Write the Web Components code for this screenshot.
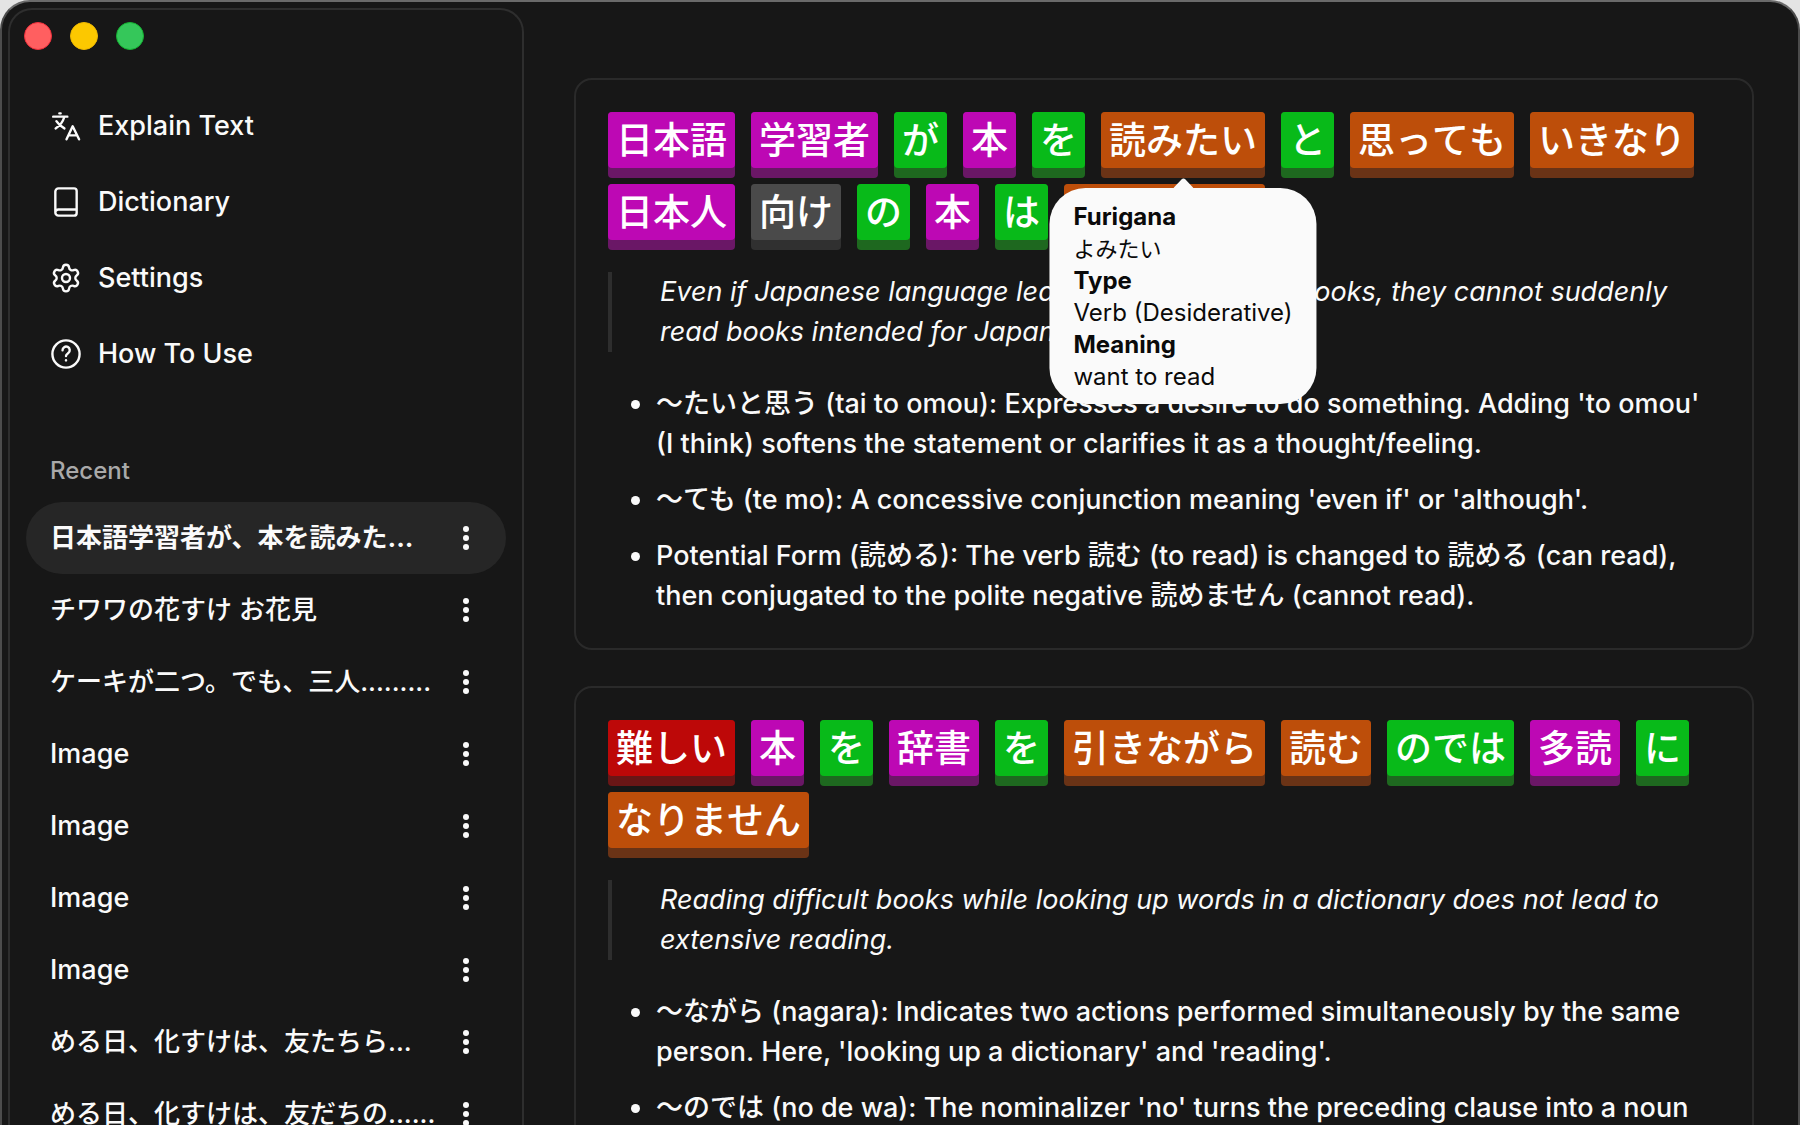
<!DOCTYPE html>
<html lang="en">
  <head>
    <meta charset="UTF-8" />
    <title>Explain Text</title>
    <style>
      body {
        margin: 0;
        height: 100vh;
        overflow: hidden;
        background: #e4e4e4;
        color: #fafafa;
        font-family: Inter, "Noto Sans CJK JP", sans-serif;
        font-size: 27px;
        font-weight: 450;
        line-height: 40px;
      }
    </style>
  </head>
  <body>
    <app-window>
      <side-bar slot="sidebar">
        <nav-item icon="translate">Explain Text</nav-item>
        <nav-item icon="book">Dictionary</nav-item>
        <nav-item icon="gear">Settings</nav-item>
        <nav-item icon="help">How To Use</nav-item>
        <recent-item slot="recent" lang="ja" active>日本語学習者が、本を読みた...</recent-item>
        <recent-item slot="recent" lang="ja">チワワの花すけ お花見</recent-item>
        <recent-item slot="recent" lang="ja">ケーキが二つ。でも、三人.........</recent-item>
        <recent-item slot="recent">Image</recent-item>
        <recent-item slot="recent">Image</recent-item>
        <recent-item slot="recent">Image</recent-item>
        <recent-item slot="recent">Image</recent-item>
        <recent-item slot="recent" lang="ja">める日、化すけは、友たちら...</recent-item>
        <recent-item slot="recent" lang="ja">める日、化すけは、友だちの......</recent-item>
      </side-bar>

      <sentence-card>
        <word-tile slot="words" type="noun">日本語</word-tile>
        <word-tile slot="words" type="noun">学習者</word-tile>
        <word-tile slot="words" type="particle">が</word-tile>
        <word-tile slot="words" type="noun">本</word-tile>
        <word-tile slot="words" type="particle">を</word-tile>
        <word-tile slot="words" type="verb">読みたい<word-tip
            slot="tip"
            furigana="よみたい"
            type="Verb (Desiderative)"
            meaning="want to read"
          ></word-tip></word-tile>
        <word-tile slot="words" type="particle">と</word-tile>
        <word-tile slot="words" type="verb">思っても</word-tile>
        <word-tile slot="words" type="verb">いきなり</word-tile>
        <word-tile slot="words" type="noun">日本人</word-tile>
        <word-tile slot="words">向け</word-tile>
        <word-tile slot="words" type="particle">の</word-tile>
        <word-tile slot="words" type="noun">本</word-tile>
        <word-tile slot="words" type="particle">は</word-tile>
        <word-tile slot="words" type="verb">読めません</word-tile>
        <span slot="translation">Even if Japanese language learners want to read books, they cannot suddenly read books intended for Japanese people.</span>
        <grammar-point>〜たいと思う (tai to omou): Expresses a desire to do something. Adding 'to omou' (I&nbsp;think) softens the statement or clarifies it as a thought/feeling.</grammar-point>
        <grammar-point>〜ても (te mo): A concessive conjunction meaning 'even if' or 'although'.</grammar-point>
        <grammar-point>Potential Form (読める): The verb 読む (to read) is changed to 読める (can read), then conjugated to the polite negative 読めません (cannot read).</grammar-point>
      </sentence-card>

      <sentence-card>
        <word-tile slot="words" type="adjective">難しい</word-tile>
        <word-tile slot="words" type="noun">本</word-tile>
        <word-tile slot="words" type="particle">を</word-tile>
        <word-tile slot="words" type="noun">辞書</word-tile>
        <word-tile slot="words" type="particle">を</word-tile>
        <word-tile slot="words" type="verb">引きながら</word-tile>
        <word-tile slot="words" type="verb">読む</word-tile>
        <word-tile slot="words" type="particle">のでは</word-tile>
        <word-tile slot="words" type="noun">多読</word-tile>
        <word-tile slot="words" type="particle">に</word-tile>
        <word-tile slot="words" type="verb">なりません</word-tile>
        <span slot="translation">Reading difficult books while looking up words in a dictionary does not lead to extensive reading.</span>
        <grammar-point>〜ながら (nagara): Indicates two actions performed simultaneously by the same person. Here, 'looking up a dictionary' and 'reading'.</grammar-point>
        <grammar-point>〜のでは (no de wa): The nominalizer 'no' turns the preceding clause into a noun</grammar-point>
      </sentence-card>
    </app-window>

    <script>
      const icons = {
        translate: `
          <path d="M2.4 5H13M7 2.5h1M10.6 5.6C9.6 9 7 12 4.2 13.8M4.8 8.4c1.4 2.2 3.6 4.2 6 5.4" />
          <path d="M12.4 22 17 12.2 21.8 22M14 19h6" />`,
        book: `
          <path d="M4 19.5V4.2A2.4 2.4 0 0 1 6.4 1.8H18a2 2 0 0 1 2 2v16.4a2 2 0 0 1-2 2H6.4A2.4 2.4 0 0 1 4 19.8a2.3 2.3 0 0 1 2.4-2.2H20" />`,
        gear: `
          <circle cx="12" cy="12" r="3" />
          <path d="M9.67 4.14a2.34 2.34 0 0 1 4.66 0 2.34 2.34 0 0 0 3.32 1.91 2.34 2.34 0 0 1 2.33 4.04 2.34 2.34 0 0 0 0 3.83 2.34 2.34 0 0 1-2.33 4.03 2.34 2.34 0 0 0-3.32 1.92 2.34 2.34 0 0 1-4.66 0 2.34 2.34 0 0 0-3.32-1.92 2.34 2.34 0 0 1-2.33-4.03 2.34 2.34 0 0 0 0-3.83 2.34 2.34 0 0 1 2.33-4.04 2.34 2.34 0 0 0 3.32-1.91" />`,
        help: `
          <circle cx="12" cy="12" r="10.2" />
          <path d="M9.4 9.2a2.7 2.7 0 1 1 4.3 2.1c-.9.7-1.7 1.2-1.7 2.2" />
          <path d="M12 16.6v.2" />`,
      };

      class AppWindow extends HTMLElement {
        constructor() {
          super();
          this.attachShadow({ mode: "open" });
        }

        connectedCallback() {
          this.shadowRoot.innerHTML = `
            <style>
              :host {
                display: flex;
                box-sizing: border-box;
                height: 100vh;
                padding: 6px 0 0 6px;
                overflow: hidden;
                border: 2px solid #4c4c4c;
                border-top-color: #6a6a6a;
                border-bottom: 0;
                border-radius: 30px 30px 0 0;
                background: #171717;
              }
              main {
                flex: 1;
                display: flex;
                flex-direction: column;
                gap: 36px;
                min-width: 0;
                padding: 70px 44px 0 50px;
              }
            </style>
            <slot name="sidebar"></slot>
            <main><slot></slot></main>
          `;
        }
      }

      class SideBar extends HTMLElement {
        constructor() {
          super();
          this.attachShadow({ mode: "open" });
        }

        connectedCallback() {
          this.shadowRoot.innerHTML = `
            <style>
              :host {
                display: block;
                box-sizing: border-box;
                flex: 0 0 516px;
                padding: 12px 16px 0;
                overflow: hidden;
                border: 2px solid #2e2e2e;
                border-bottom: 0;
                border-radius: 24px 24px 0 0;
              }
              .lights {
                display: flex;
                gap: 18px;
                margin-left: -2px;
              }
              .lights button {
                width: 28px;
                height: 28px;
                padding: 0;
                border: 1px solid var(--edge);
                border-radius: 50%;
                background: var(--fill);
              }
              nav {
                margin-top: 38px;
              }
              h2 {
                margin: 59px 24px 11px;
                color: #a9a9a9;
                font-size: 24px;
                font-weight: 500;
                line-height: 40px;
              }
            </style>
            <div class="lights">
              <button type="button" aria-label="Close" style="--fill: #ff5f60; --edge: #f0303c"></button>
              <button type="button" aria-label="Minimize" style="--fill: #fcc800; --edge: #eeb800"></button>
              <button type="button" aria-label="Zoom" style="--fill: #35c75a; --edge: #14b432"></button>
            </div>
            <nav><slot></slot></nav>
            <h2>Recent</h2>
            <slot name="recent"></slot>
          `;
        }
      }

      class NavItem extends HTMLElement {
        constructor() {
          super();
          this.attachShadow({ mode: "open" });
        }

        connectedCallback() {
          this.shadowRoot.innerHTML = `
            <style>
              :host {
                display: block;
              }
              a {
                display: flex;
                align-items: center;
                gap: 16px;
                height: 76px;
                padding-left: 24px;
                color: inherit;
                text-decoration: none;
              }
              svg {
                width: 32px;
                height: 32px;
                fill: none;
                stroke: currentColor;
                stroke-width: 1.8;
                stroke-linecap: round;
                stroke-linejoin: round;
              }
            </style>
            <a href="#">
              <svg viewBox="0 0 24 24" aria-hidden="true">${icons[this.getAttribute("icon")]}</svg>
              <slot></slot>
            </a>
          `;
        }
      }

      class RecentItem extends HTMLElement {
        constructor() {
          super();
          this.attachShadow({ mode: "open" });
        }

        connectedCallback() {
          this.shadowRoot.innerHTML = `
            <style>
              :host {
                display: flex;
                align-items: center;
                height: 72px;
                padding: 0 24px;
                border-radius: 36px;
              }
              :host([lang="ja"]) {
                font-size: 26px;
                font-weight: 500;
              }
              :host([active]) {
                background: #262626;
                font-weight: 700;
              }
              a {
                flex: 1;
                overflow: hidden;
                color: inherit;
                text-decoration: none;
                white-space: nowrap;
              }
              button {
                width: 32px;
                height: 32px;
                padding: 0;
                border: 0;
                background: none;
                color: inherit;
              }
              svg {
                display: block;
                fill: currentColor;
              }
            </style>
            <a href="#"><slot></slot></a>
            <button type="button" aria-label="More">
              <svg width="32" height="32" viewBox="0 0 32 32">
                <circle cx="16" cy="7" r="3" />
                <circle cx="16" cy="16" r="3" />
                <circle cx="16" cy="25" r="3" />
              </svg>
            </button>
          `;
        }
      }

      class SentenceCard extends HTMLElement {
        constructor() {
          super();
          this.attachShadow({ mode: "open" });
        }

        connectedCallback() {
          this.shadowRoot.innerHTML = `
            <style>
              :host {
                display: block;
                padding: 32px;
                border: 2px solid #2a2a2a;
                border-radius: 18px;
              }
              .words {
                display: flex;
                flex-wrap: wrap;
                gap: 6px 16px;
              }
              blockquote {
                margin: 22px 0 32px;
                padding-left: 48px;
                border-left: 4px solid #2e2e2e;
                font-style: italic;
              }
              ul {
                display: flex;
                flex-direction: column;
                gap: 16px;
                margin: 0;
                padding: 0 0 0 48px;
              }
            </style>
            <div class="words"><slot name="words"></slot></div>
            <blockquote><slot name="translation"></slot></blockquote>
            <ul role="list"><slot></slot></ul>
          `;
        }
      }

      class GrammarPoint extends HTMLElement {
        constructor() {
          super();
          this.attachShadow({ mode: "open" });
        }

        connectedCallback() {
          this.setAttribute("role", "listitem");
          this.shadowRoot.innerHTML = `
            <style>
              :host {
                display: block;
                position: relative;
              }
              :host::before {
                content: "";
                position: absolute;
                top: 16px;
                left: -25px;
                width: 9px;
                height: 9px;
                border-radius: 50%;
                background: currentColor;
              }
            </style>
            <slot></slot>
          `;
        }
      }

      class WordTile extends HTMLElement {
        constructor() {
          super();
          this.attachShadow({ mode: "open" });
        }

        connectedCallback() {
          this.shadowRoot.innerHTML = `
            <style>
              :host {
                --face: #4a4a4a;
                --side: #303030;
                display: block;
                position: relative;
              }
              :host([type="noun"]) {
                --face: #bd08b4;
                --side: #6a1766;
              }
              :host([type="particle"]) {
                --face: #08ba19;
                --side: #1e681f;
              }
              :host([type="verb"]) {
                --face: #bd4e0a;
                --side: #6a3316;
              }
              :host([type="adjective"]) {
                --face: #bd0808;
                --side: #6a1616;
              }
              button {
                display: block;
                padding: 0 0 10px;
                border: 0;
                border-radius: 4px;
                background: var(--side);
                color: #fff;
                font: inherit;
                font-size: 37px;
                font-weight: 500;
                font-kerning: none;
                line-height: 54px;
              }
              .face {
                display: block;
                padding: 2px 8px 0;
                border-radius: 4px;
                background: var(--face);
              }
            </style>
            <button type="button"><span class="face"><slot></slot></span></button>
            <slot name="tip"></slot>
          `;
        }
      }

      class WordTip extends HTMLElement {
        constructor() {
          super();
          this.attachShadow({ mode: "open" });
        }

        connectedCallback() {
          this.shadowRoot.innerHTML = `
            <style>
              :host {
                position: absolute;
                z-index: 1;
                top: calc(100% + 10px);
                left: 50%;
                transform: translateX(-50%);
                padding: 13px 24px 11px;
                border-radius: 36px;
                background: #fafafa;
                color: #0a0a0a;
                font-size: 24px;
                font-weight: 400;
                line-height: 32px;
                white-space: nowrap;
              }
              svg {
                position: absolute;
                bottom: 100%;
                left: calc(50% - 10px);
                fill: #fafafa;
              }
              dl,
              dd {
                margin: 0;
              }
              dt {
                font-weight: 700;
              }
              dd:lang(ja) {
                font-size: 22px;
              }
            </style>
            <svg width="20" height="10" viewBox="0 0 20 10"><path d="M0 10 8 1.4Q10-.6 12 1.4L20 10z" /></svg>
            <dl>
              <dt>Furigana</dt>
              <dd lang="ja">${this.getAttribute("furigana")}</dd>
              <dt>Type</dt>
              <dd>${this.getAttribute("type")}</dd>
              <dt>Meaning</dt>
              <dd>${this.getAttribute("meaning")}</dd>
            </dl>
          `;
        }
      }

      window.customElements.define("app-window", AppWindow);
      window.customElements.define("side-bar", SideBar);
      window.customElements.define("nav-item", NavItem);
      window.customElements.define("recent-item", RecentItem);
      window.customElements.define("sentence-card", SentenceCard);
      window.customElements.define("grammar-point", GrammarPoint);
      window.customElements.define("word-tile", WordTile);
      window.customElements.define("word-tip", WordTip);
    </script>
  </body>
</html>
